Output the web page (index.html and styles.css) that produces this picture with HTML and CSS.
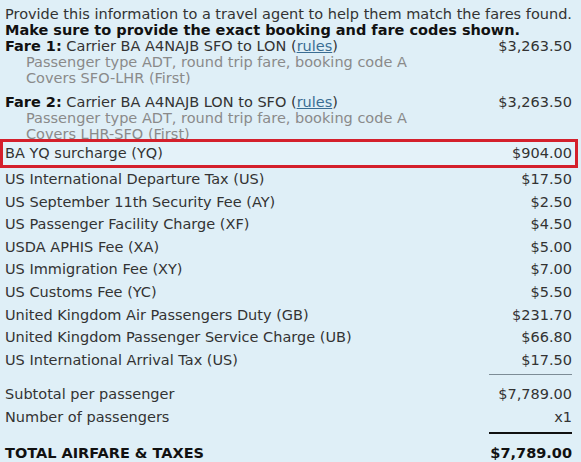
FILE: index.html
```html
<!DOCTYPE html>
<html>
<head>
<meta charset="utf-8">
<link rel="stylesheet" href="styles.css">
</head>
<body>
<div class="page">
  <div class="intro">
    <p>Provide this information to a travel agent to help them match the fares found.</p>
    <p class="strong">Make sure to provide the exact booking and fare codes shown.</p>
  </div>
  <div class="fare">
    <div class="row"><span><b>Fare 1:</b> Carrier BA A4NAJB SFO to LON (<a href="#">rules</a>)</span><span>$3,263.50</span></div>
    <div class="sub">Passenger type ADT, round trip fare, booking code A</div>
    <div class="sub">Covers SFO-LHR (First)</div>
  </div>
  <div class="fare last">
    <div class="row"><span><b>Fare 2:</b> Carrier BA A4NAJB LON to SFO (<a href="#">rules</a>)</span><span>$3,263.50</span></div>
    <div class="sub">Passenger type ADT, round trip fare, booking code A</div>
    <div class="sub">Covers LHR-SFO (First)</div>
  </div>
  <div class="taxes">
    <div class="tax hl"><span>BA YQ surcharge (YQ)</span><span>$904.00</span></div>
    <div class="tax"><span>US International Departure Tax (US)</span><span>$17.50</span></div>
    <div class="tax"><span>US September 11th Security Fee (AY)</span><span>$2.50</span></div>
    <div class="tax"><span>US Passenger Facility Charge (XF)</span><span>$4.50</span></div>
    <div class="tax"><span>USDA APHIS Fee (XA)</span><span>$5.00</span></div>
    <div class="tax"><span>US Immigration Fee (XY)</span><span>$7.00</span></div>
    <div class="tax"><span>US Customs Fee (YC)</span><span>$5.50</span></div>
    <div class="tax"><span>United Kingdom Air Passengers Duty (GB)</span><span>$231.70</span></div>
    <div class="tax"><span>United Kingdom Passenger Service Charge (UB)</span><span>$66.80</span></div>
    <div class="tax"><span>US International Arrival Tax (US)</span><span>$17.50</span></div>
  </div>
  <div class="rule light"></div>
  <div class="tax"><span>Subtotal per passenger</span><span>$7,789.00</span></div>
  <div class="tax"><span>Number of passengers</span><span>x1</span></div>
  <div class="rule dark"></div>
  <div class="tax total"><span>TOTAL AIRFARE &amp; TAXES</span><span>$7,789.00</span></div>
</div>
</body>
</html>
```
FILE: styles.css
```css
html, body {
  margin: 0;
  padding: 0;
  background: #dfeff7;
}
.page {
  font-family: "DejaVu Sans", Verdana, sans-serif;
  font-size: 14.5px;
  color: #333;
  padding: 6px 9px 0 5px;
}
p { margin: 0; line-height: 16px; }
.strong { font-weight: bold; color: #111; }
.fare { margin-bottom: 8px; }
.fare.last { margin-bottom: 0; }
.row {
  display: flex;
  justify-content: space-between;
  line-height: 16px;
}
.row b { color: #111; }
a { color: #3a6d93; }
.sub {
  color: #8a8a8a;
  padding-left: 21px;
  line-height: 16px;
}
.taxes { margin-top: -3px; }
.tax {
  display: flex;
  justify-content: space-between;
  line-height: 22.6px;
}
.hl {
  position: relative;
  margin-left: -5px;
  margin-right: -6px;
  padding: 0 3px 0 2px;
  border: 3px solid #d4202c;
  line-height: 23px;
  background: #e4f2f9;
}
.rule {
  margin: 3px 0 8px auto;
  width: 83px;
  height: 1px;
}
.light { background: #7d8c96; }
.dark { background: #111; height: 2px; }
.total { font-weight: bold; color: #111; }
```
